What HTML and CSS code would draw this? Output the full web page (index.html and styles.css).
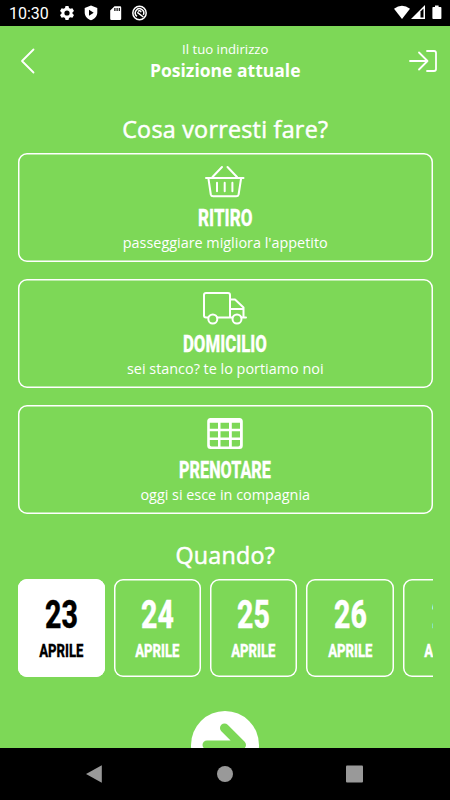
FILE: index.html
```html
<!DOCTYPE html>
<html lang="it">
<head>
<meta charset="utf-8">
<title>Ordina</title>
<link rel="stylesheet" href="styles.css">
</head>
<body>
<div class="status">
  <span class="clock">10:30</span>
  <svg class="status-left" width="90" height="16" viewBox="0 0 90 16">
    <g fill="#fff">
      <path fill-rule="evenodd" d="M5.5 1h3l.5 2 1.4.8 2-.6L14 5.900l-1.500 1.400v1.400l1.500 1.400-1.600 2.700-2-.6-1.400.8-.5 2h-3L5 13l-1.400-.8-2 .6L0 10.100l1.500-1.400V7.300L0 5.900l1.600-2.700 2 .6L5 3zM7 5.400a2.600 2.600 0 1 0 0 5.200a2.600 2.600 0 0 0 0-5.200z"/>
      <path fill-rule="evenodd" d="M31 .5l6.300 2.600v4.400c0 3.500-2.600 6.400-6.300 7.800-3.700-1.400-6.300-4.300-6.300-7.800V3.100zM29 4.800v6l4.700-3z"/>
      <path fill-rule="evenodd" d="M54.500 1.200H60q1.200 0 1.200 1.200v11.400q0 1.200-1.200 1.200h-8.600q-1.200 0-1.200-1.200V5.500zM54.300 3v3h1.200V3zM56.500 3v3h1.200V3zM58.700 3v3h1.200V3z"/>
    </g>
    <g fill="none" stroke="#fff" stroke-width="1.500">
      <circle cx="79.500" cy="8" r="6.700"/>
      <path d="M77 11.300a4.200 4.200 0 1 1 6.300-1.500M77.300 7.300l6 4.700"/>
      <path d="M78 6.300q2-1.500 3.200 1"/>
    </g>
  </svg>
  <svg class="status-right" width="50" height="16" viewBox="0 0 50 16">
    <path d="M0 3.800Q8-2.500 16 3.800L8 14z" fill="#fff"/>
    <path d="M31 0v14H17z" fill="#fff"/>
    <path d="M26.500 6.500l3-3v9h-3z" fill="#000"/>
    <path d="M41 .5h3.600V2h2q.8 0 .8.800v10.400q0 .8-.8.800h-7.400q-.8 0-.8-.8V2.800q0-.8.800-.8H41z" fill="#fff"/>
  </svg>
</div>
<main class="screen">
  <header class="top">
    <svg class="back" width="16" height="26" viewBox="0 0 16 26"><path d="M13.500 1.500L2 13l11.500 11.500" class="line"/></svg>
    <div class="address">
      <div class="address-label">Il tuo indirizzo</div>
      <div class="address-value">Posizione attuale</div>
    </div>
    <svg width="30" height="24" viewBox="0 0 30 24"><path d="M2 12h17.500M11 3.500l8.500 8.500-8.500 8.500M19 2h7q2 0 2 2v16q0 2-2 2h-7" class="line"/></svg>
  </header>
  <h1 class="heading">Cosa vorresti fare?</h1>
  <section class="options">
    <div class="option">
      <svg class="icon" width="42" height="34" viewBox="0 0 42 34">
        <g class="line"><path d="M2 13h37.500M4.500 14l2.300 15.500q.4 1.800 2.400 1.800h23q2 0 2.400-1.800L37 14M8.500 12L18 2M33 12L23.500 2"/><path d="M13 17.800v8.500M20.700 17.800v8.500M28.400 17.800v8.500"/></g>
      </svg>
      <h2 class="name ritiro">RITIRO</h2>
      <p class="hint">passeggiare migliora l'appetito</p>
    </div>
    <div class="option">
      <svg class="icon" width="46" height="34" viewBox="0 0 46 34">
        <g class="line"><path d="M5.500 26.500H4q-2 0-2-2V4q0-2 2-2h22q2 0 2 2v22.500H15M28 8.500h5l8.500 8v10M28 18h13M28 26.500h2.500M39.500 26.500H44"/><circle cx="10.800" cy="28" r="4.500"/><circle cx="35" cy="28" r="4.500"/></g>
      </svg>
      <h2 class="name domicilio">DOMICILIO</h2>
      <p class="hint">sei stanco? te lo portiamo noi</p>
    </div>
    <div class="option">
      <svg class="icon" width="36" height="34" viewBox="0 0 36 34">
        <path fill="#fff" fill-rule="evenodd" d="M3.500 1h29Q35.800 1 35.800 4.500v24q0 3.500-3.300 3.500h-29Q.2 32 .2 28.500v-24Q.2 1 3.500 1zM2.800 5.800v5.900h8.200v-5.900zM13.500 5.800v5.900h8.500v-5.900zM24.800 5.800v5.900H33v-5.900zM2.800 14.200v6.300h8.200v-6.300zM13.500 14.200v6.300h8.500v-6.300zM24.800 14.200v6.300H33v-6.300zM2.800 23v4.700q0 1.800 1.800 1.800h6.400V23zM13.500 23v6.500h8.500V23zM24.800 23v6.500h6.400q1.800 0 1.800-1.800V23z"/>
      </svg>
      <h2 class="name prenotare">PRENOTARE</h2>
      <p class="hint">oggi si esce in compagnia</p>
    </div>
  </section>
  <h1 class="heading when">Quando?</h1>
  <section class="dates">
    <div class="date selected"><b class="day">23</b><b class="month">APRILE</b></div>
    <div class="date"><b class="day">24</b><b class="month">APRILE</b></div>
    <div class="date"><b class="day">25</b><b class="month">APRILE</b></div>
    <div class="date"><b class="day">26</b><b class="month">APRILE</b></div>
    <div class="date"><b class="day narrow">27</b><b class="month">APRILE</b></div>
  </section>
  <svg class="go" width="68" height="68" viewBox="0 0 68 68">
    <circle cx="34" cy="34" r="34" fill="#fff"/>
    <path d="M16 34h34M33.500 17L50.500 34l-17 17" fill="none" stroke="#7dd857" stroke-width="9" stroke-linecap="round" stroke-linejoin="round"/>
  </svg>
</main>
<nav class="nav">
  <svg width="450" height="53" viewBox="0 0 450 53">
    <g fill="#999"><path d="M86 26L101.800 17.200v17.500z"/><circle cx="225" cy="26" r="8"/><rect x="346" y="17.500" width="17" height="17" rx="1"/></g>
  </svg>
</nav>
</body>
</html>
```
FILE: styles.css
```css
* { box-sizing: border-box; }
body {
  margin: 0;
  width: 450px;
  height: 800px;
  overflow: hidden;
  display: flex;
  flex-direction: column;
  background: #000;
  color: #fff;
  font-family: "Open Sans", sans-serif;
}
h1, h2, p { margin: 0; }
svg { display: block; flex: none; }
.line {
  fill: none;
  stroke: #fff;
  stroke-width: 2;
  stroke-linecap: round;
  stroke-linejoin: round;
}
.top .line { stroke-width: 1.800; }
.status {
  height: 26px;
  flex: none;
  display: flex;
  align-items: center;
  padding: 0 6px 0 9px;
}
.clock {
  width: 51px;
  font: 16px/26px Roboto, sans-serif;
  padding-top: 1px;
}
.status-right { margin-left: auto; }
.screen {
  height: 722px;
  flex: none;
  overflow: hidden;
  background: #7dd857;
  padding: 0 17px 0 17.500px;
}
.top {
  height: 69px;
  display: flex;
  align-items: center;
  justify-content: space-between;
  margin: 0 -5px 0 2px;
}
.address { text-align: center; padding-left: 7px; margin-top: -1px; }
.address-label { font-size: 13.200px; line-height: 20px; }
.address-value { font-size: 17.500px; line-height: 22px; font-weight: 700; }
.heading {
  height: 58px;
  padding-top: 17px;
  text-align: center;
  font-size: 23.300px;
  line-height: 34px;
  font-weight: 400;
  letter-spacing: .25px;
  -webkit-text-stroke: .5px currentColor;
}
.options { display: flex; flex-direction: column; gap: 17px; }
.option {
  height: 109px;
  box-shadow: inset 0 0 0 1.500px #fff;
  border-radius: 9px;
  display: flex;
  flex-direction: column;
  align-items: center;
  padding-top: 12px;
}
.name, .day, .month {
  font-family: Roboto, sans-serif;
  font-weight: 800;
  -webkit-text-stroke: .3px currentColor;
}
.name { font-size: 24px; line-height: 32px; margin-top: 3px; }
.ritiro { transform: scaleX(.71); }
.domicilio { transform: scaleX(.7); }
.prenotare { transform: scaleX(.675); }
.hint { font-size: 14.400px; line-height: 20px; margin-top: -1px; white-space: nowrap; }
.when { height: 65px; padding-top: 24px; }
.dates { display: flex; gap: 9px; overflow: hidden; }
.date {
  width: 87.300px;
  height: 98px;
  flex: none;
  box-shadow: inset 0 0 0 1.500px #fff;
  border-radius: 9px;
  display: flex;
  flex-direction: column;
  align-items: center;
  padding-top: 13px;
}
.selected { background: #fff; color: #000; }
.day { font-size: 39px; line-height: 46px; transform: scaleX(.73); }
.narrow { transform: scaleX(.66); }
.month { font-size: 18px; line-height: 26px; transform: scaleX(.73); }
.go { margin: 34px auto 0; }
.nav { height: 52px; flex: none; }
```
